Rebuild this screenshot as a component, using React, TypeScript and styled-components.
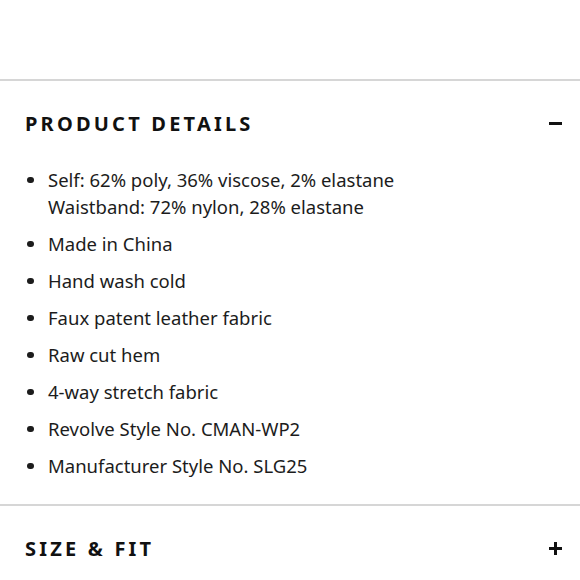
import * as React from "react";
import styled, { createGlobalStyle } from "styled-components";

const GlobalStyle = createGlobalStyle`
  html, body {
    margin: 0;
    padding: 0;
    background: #fff;
  }
  body {
    font-family: "Noto Sans", "DejaVu Sans", sans-serif;
    color: #1a1a1a;
  }
`;

const Page = styled.div`
  width: 580px;
  height: 580px;
  overflow: hidden;
  padding-top: 79px;
  box-sizing: border-box;
`;

const Section = styled.section`
  border-top: 2px solid #d6d6d6;
`;

const Header = styled.button`
  display: flex;
  align-items: center;
  justify-content: space-between;
  width: 100%;
  height: 85px;
  padding: 0 18px 0 25px;
  border: 0;
  background: none;
  cursor: pointer;
  font-family: inherit;
  color: #111;
`;

const Title = styled.h2`
  margin: 0;
  font-size: 20px;
  font-weight: 700;
  letter-spacing: 3.2px;
  text-transform: uppercase;
`;

const Toggle = styled.span<{ $open: boolean }>`
  position: relative;
  width: 13px;
  height: 13px;

  &::before,
  &::after {
    content: "";
    position: absolute;
    background: #111;
  }
  &::before {
    left: 0;
    right: 0;
    top: 5px;
    height: 3px;
  }
  &::after {
    top: 0;
    bottom: 0;
    left: 5px;
    width: 3px;
    display: ${p => (p.$open ? "none" : "block")};
  }
`;

const List = styled.ul`
  list-style: none;
  margin: 0;
  padding: 0 0 25px 48px;
  display: flex;
  flex-direction: column;
  gap: 10px;
`;

const Item = styled.li`
  position: relative;
  font-size: 18.5px;
  line-height: 27px;
  color: #1c1c1c;

  &::before {
    content: "";
    position: absolute;
    left: -21px;
    top: 10.5px;
    width: 6.5px;
    height: 6.5px;
    border-radius: 50%;
    background: #1c1c1c;
  }
`;

const details = [
  ["Self: 62% poly, 36% viscose, 2% elastane", "Waistband: 72% nylon, 28% elastane"],
  ["Made in China"],
  ["Hand wash cold"],
  ["Faux patent leather fabric"],
  ["Raw cut hem"],
  ["4-way stretch fabric"],
  ["Revolve Style No. CMAN-WP2"],
  ["Manufacturer Style No. SLG25"]
];

const App: React.FC = () => {
  const [open, setOpen] = React.useState<string>("details");

  const toggle = (key: string) => setOpen(open === key ? "" : key);

  return (
    <Page>
      <GlobalStyle />
      <Section>
        <Header onClick={() => toggle("details")}>
          <Title>Product Details</Title>
          <Toggle $open={open === "details"} />
        </Header>
        {open === "details" && (
          <List>
            {details.map((lines, i) => (
              <Item key={i}>
                {lines.map((l, j) => (
                  <React.Fragment key={j}>
                    {j > 0 && <br />}
                    {l}
                  </React.Fragment>
                ))}
              </Item>
            ))}
          </List>
        )}
      </Section>
      <Section>
        <Header onClick={() => toggle("size")}>
          <Title>Size &amp; Fit</Title>
          <Toggle $open={open === "size"} />
        </Header>
      </Section>
    </Page>
  );
};

export default App;
